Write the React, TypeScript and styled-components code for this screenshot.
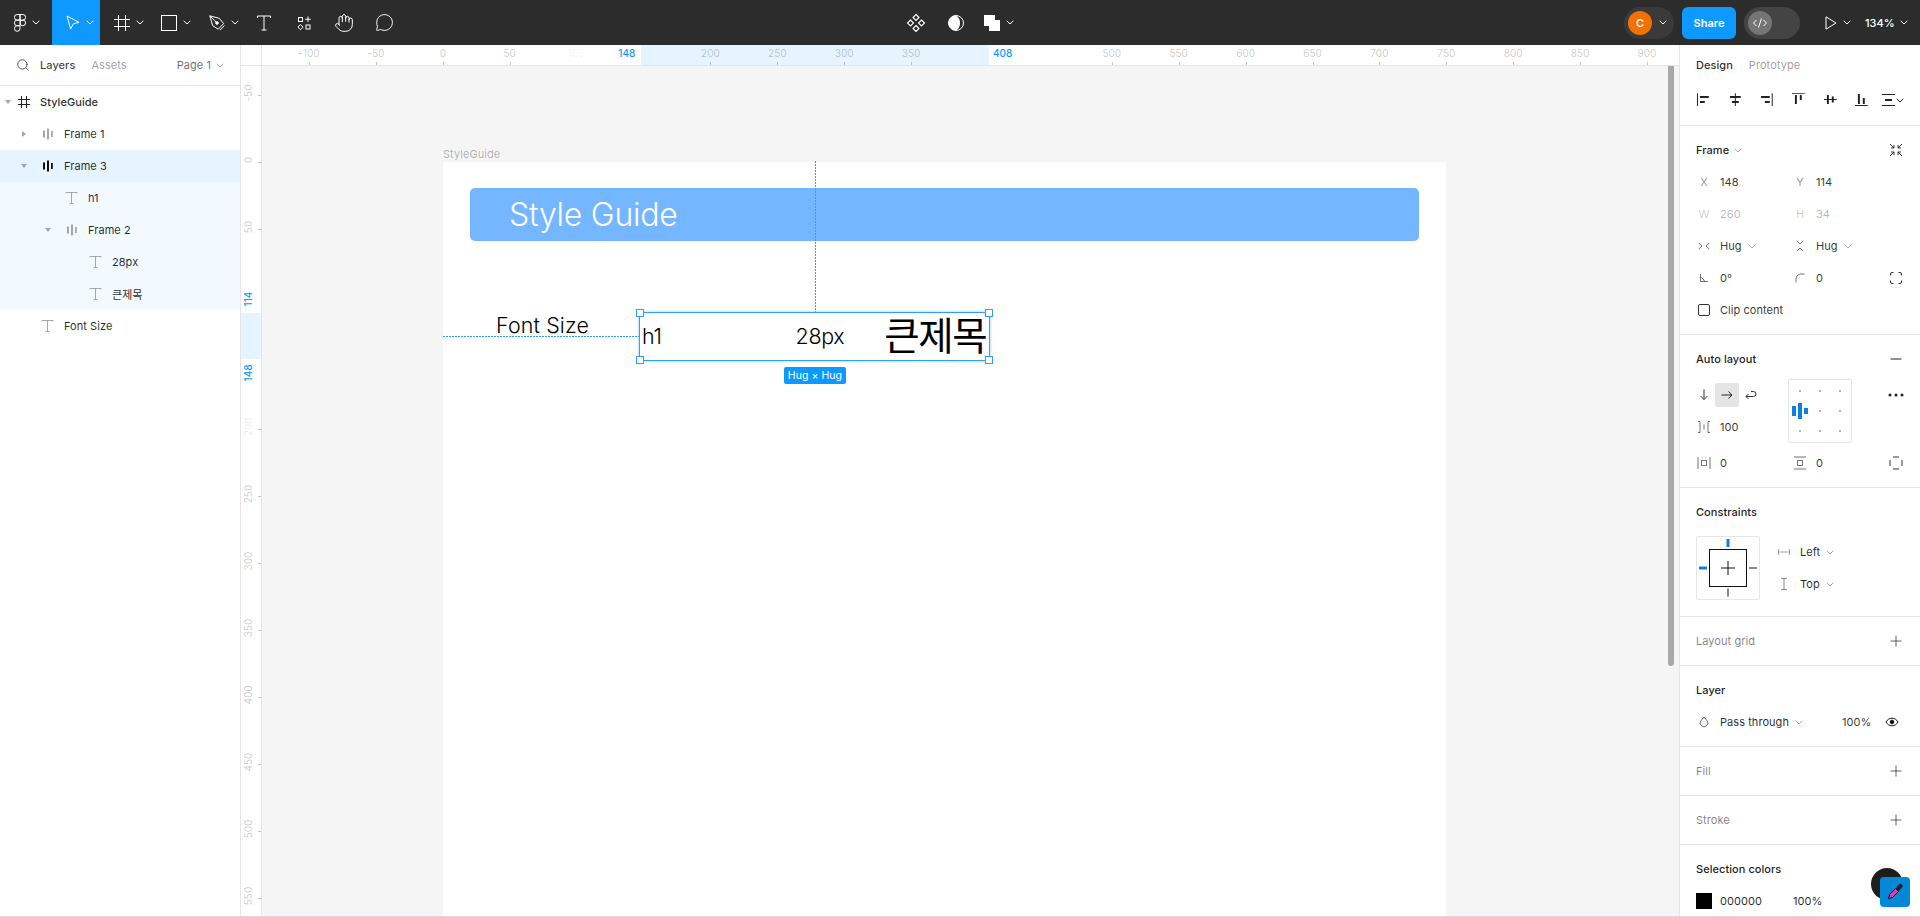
import { FC, ReactNode } from "react";
import styled, { createGlobalStyle } from "styled-components";
import { Hand, MessageCircle, Search } from "lucide-react";

const UI_FONT = `Inter, "Noto Sans CJK KR", sans-serif`;
const RULER_SCALE = 1.338;
const ORIGIN_X = 442.8;
const ORIGIN_Y = 161.7;
const BLUE = "#0d99ff";

const GlobalStyle = createGlobalStyle`
  html, body {
    margin: 0;
    padding: 0;
    background: #d3deea;
  }
  * {
    box-sizing: border-box;
  }
`;

/* small drawings */

const Chevron: FC<{ light?: boolean; dark?: boolean }> = ({ light, dark }) => (
  <svg width="8" height="5" viewBox="0 0 8 5" fill="none">
    <path d="M.7.8 4 4 7.3.8" stroke={light ? "#fff" : dark ? "#222" : "rgba(0,0,0,.35)"} strokeWidth="1" />
  </svg>
);

const Ico: FC<{ size?: number; w?: number; h?: number; children: ReactNode; stroke?: string; fill?: string }> = ({
  size = 16,
  w,
  h,
  children,
  stroke = "none",
  fill = "none",
}) => (
  <svg width={w ?? size} height={h ?? size} viewBox={`0 0 ${w ?? size} ${h ?? size}`} fill={fill} stroke={stroke}>
    {children}
  </svg>
);

const TextGlyph = () => (
  <Ico size={14} stroke="#a6a6a6">
    <path d="M1 2.5V1.500h11v1M6.500 1.500v11M4.500 12.500h4" />
  </Ico>
);

const AutoGlyph: FC<{ dark?: boolean }> = ({ dark }) => (
  <Ico size={12} fill={dark ? "#111" : "#a6a6a6"}>
    <path d="M1 2.500h2v7H1zM5 .5h2v11H5zM9 3h1.800v6H9z" />
  </Ico>
);

const FrameGlyph = () => (
  <Ico size={12} stroke="#222">
    <path d="M3.500 0v12M8.500 0v12M0 3.500h12M0 8.500h12" />
  </Ico>
);

const Caret: FC<{ open?: boolean }> = ({ open }) => (
  <svg width="6" height="6" viewBox="0 0 6 6" fill="#a6a6a6">
    {open ? <path d="M0 1h6L3 5z" /> : <path d="M1 0v6l4-3z" />}
  </svg>
);

const PlusIcon = () => (
  <Ico size={12} stroke="rgba(0,0,0,.6)">
    <path d="M6 .5v11M.5 6h11" />
  </Ico>
);

const alignPaths = [
  "M1 1h1v13H1zM4 4h9v2H4zM4 9h5v2H4z",
  "M7 1h1v13H7zM2 4h11v2H2zM4 9h7v2H4z",
  "M13 1h1v13h-1zM2 4h9v2H2zM6 9h5v2H6z",
  "M1 1h13v1H1zM4 3h2v9H4zM9 3h2v5H9z",
  "M1 7h13v1H1zM4 3h2v9H4zM9 4.500h2v6H9z",
  "M1 13h13v1H1zM4 2h2v10H4zM9 6h2v6H9z",
];

/* page */

const Page = styled.div`
  height: 916px;
  overflow: hidden;
  display: flex;
  flex-direction: column;
  font-family: ${UI_FONT};
  font-size: 11px;
  letter-spacing: 0.005em;
  color: rgba(0, 0, 0, 0.85);
  background: #fff;
`;

const TopBar = styled.header`
  flex: 0 0 45px;
  display: flex;
  align-items: center;
  background: #2c2c2c;
  color: #fff;
`;

const ToolGroup = styled.div`
  display: flex;
  width: 404px;
  height: 100%;
`;

const Tool = styled.div<{ $w: number; $active?: boolean; $pad?: number }>`
  width: ${({ $w }) => $w}px;
  height: 100%;
  display: flex;
  align-items: center;
  justify-content: ${({ $pad }) => ($pad === undefined ? "center" : "flex-start")};
  padding-left: ${({ $pad }) => $pad ?? 0}px;
  gap: 6px;
  background: ${({ $active }) => ($active ? BLUE : "transparent")};
`;

const CenterGroup = styled.div`
  margin-left: 500px;
  display: flex;
  align-items: center;
  gap: 16px;
`;

const CenterTool = styled.div`
  display: flex;
  align-items: center;
  gap: 6px;
`;

const RightGroup = styled.div`
  margin-left: auto;
  display: flex;
  align-items: center;
`;

const AvatarPill = styled.div`
  width: 50px;
  height: 32px;
  border-radius: 16px;
  background: #3a3a3a;
  display: flex;
  align-items: center;
  padding-left: 4px;
  gap: 7px;
`;

const Avatar = styled.div`
  width: 24px;
  height: 24px;
  border-radius: 50%;
  background: #f27100;
  display: flex;
  align-items: center;
  justify-content: center;
  font-weight: 500;
`;

const ShareButton = styled.div`
  margin-left: 8px;
  width: 54px;
  height: 32px;
  border-radius: 6px;
  background: ${BLUE};
  display: flex;
  align-items: center;
  justify-content: center;
  font-weight: 600;
`;

const DevToggle = styled.div`
  margin-left: 8px;
  width: 56px;
  height: 32px;
  border-radius: 16px;
  background: #444;
  padding: 4px;
`;

const DevKnob = styled.div`
  width: 24px;
  height: 24px;
  border-radius: 50%;
  background: #757575;
  display: flex;
  align-items: center;
  justify-content: center;
`;

const PlayTool = styled.div`
  margin-left: 25px;
  width: 40px;
  display: flex;
  align-items: center;
  gap: 6px;
`;

const ZoomTool = styled.div`
  width: 55px;
  display: flex;
  align-items: center;
  gap: 5px;
  font-weight: 500;
`;

const Body = styled.div`
  flex: 1;
  display: flex;
  min-height: 0;
`;

/* layers panel */

const LeftPanel = styled.aside`
  flex: 0 0 241px;
  border-right: 1px solid #e5e5e5;
`;

const PanelTabs = styled.div`
  height: 41px;
  border-bottom: 1px solid #e5e5e5;
  display: flex;
  align-items: center;
  padding-left: 16px;
`;

const LayersTab = styled.span`
  margin-left: 10px;
  font-weight: 500;
  color: rgba(0, 0, 0, 0.75);
`;

const AssetsTab = styled.span`
  margin-left: 16px;
  color: rgba(0, 0, 0, 0.4);
`;

const PageSwitch = styled.span`
  margin-left: auto;
  margin-right: 16px;
  display: flex;
  align-items: center;
  gap: 5px;
  color: rgba(0, 0, 0, 0.6);
`;

const LayerRow = styled.div<{ $pad: number; $tint?: "main" | "child"; $strong?: boolean }>`
  height: 32px;
  display: flex;
  align-items: center;
  padding-left: ${({ $pad }) => $pad}px;
  font-weight: ${({ $strong }) => ($strong ? 500 : 400)};
  background: ${({ $tint }) => ($tint === "main" ? "#e5f4ff" : $tint === "child" ? "#f2f9ff" : "transparent")};
`;

const CaretSlot = styled.span<{ $gap: number }>`
  width: 16px;
  margin-right: ${({ $gap }) => $gap}px;
  display: flex;
  justify-content: center;
`;

const IconSlot = styled.span`
  width: 16px;
  margin-right: 8px;
  display: flex;
  align-items: center;
  justify-content: center;
`;

interface Layer {
  name: string;
  pad: number;
  icon: ReactNode;
  caret?: "open" | "closed";
  caretGap?: number;
  tint?: "main" | "child";
  strong?: boolean;
}

const layers: Layer[] = [
  { name: "StyleGuide", pad: 0, icon: <FrameGlyph />, caret: "open", caretGap: 0, strong: true },
  { name: "Frame 1", pad: 16, icon: <AutoGlyph />, caret: "closed", caretGap: 8 },
  { name: "Frame 3", pad: 16, icon: <AutoGlyph dark />, caret: "open", caretGap: 8, tint: "main" },
  { name: "h1", pad: 64, icon: <TextGlyph />, tint: "child" },
  { name: "Frame 2", pad: 40, icon: <AutoGlyph />, caret: "open", caretGap: 8, tint: "child" },
  { name: "28px", pad: 88, icon: <TextGlyph />, tint: "child" },
  { name: "큰제목", pad: 88, icon: <TextGlyph />, tint: "child" },
  { name: "Font Size", pad: 40, icon: <TextGlyph /> },
];

/* rulers and canvas */

const CanvasArea = styled.main`
  flex: 1;
  min-width: 0;
  display: grid;
  grid-template-columns: 21px 1fr;
  grid-template-rows: 21px 1fr;
`;

const RulerCorner = styled.div`
  border-right: 1px solid #e5e5e5;
  border-bottom: 1px solid #e5e5e5;
`;

const TopRuler = styled.div`
  position: relative;
  overflow: hidden;
  border-bottom: 1px solid #e5e5e5;
`;

const SideRuler = styled.div`
  position: relative;
  overflow: hidden;
  border-right: 1px solid #e5e5e5;
`;

const RulerBand = styled.div`
  position: absolute;
  background: #e5f4ff;
`;

const TopLabel = styled.span<{ $blue?: boolean; $faint?: boolean }>`
  position: absolute;
  top: 1px;
  transform: translateX(-50%);
  font-size: 10px;
  line-height: 14px;
  letter-spacing: 0;
  font-weight: ${({ $blue }) => ($blue ? 500 : 400)};
  color: ${({ $blue, $faint }) => ($blue ? BLUE : $faint ? "rgba(0,0,0,.07)" : "rgba(0,0,0,.22)")};
`;

const TopTick = styled.i`
  position: absolute;
  bottom: 0;
  width: 1px;
  height: 3px;
  background: rgba(0, 0, 0, 0.22);
`;

const SideLabel = styled.span<{ $blue?: boolean; $faint?: boolean }>`
  position: absolute;
  left: 7px;
  width: 0;
  height: 0;
  display: flex;
  align-items: center;
  justify-content: center;
  white-space: nowrap;
  transform: rotate(-90deg);
  font-size: 10px;
  letter-spacing: 0;
  font-weight: ${({ $blue }) => ($blue ? 500 : 400)};
  color: ${({ $blue, $faint }) => ($blue ? BLUE : $faint ? "rgba(0,0,0,.1)" : "rgba(0,0,0,.22)")};
`;

const SideTick = styled.i`
  position: absolute;
  right: 0;
  width: 3px;
  height: 1px;
  background: rgba(0, 0, 0, 0.22);
`;

const Stage = styled.div`
  position: relative;
  overflow: hidden;
  background: #f5f5f5;
`;

const ScrollThumb = styled.div`
  position: absolute;
  top: 0;
  right: 5px;
  width: 6px;
  height: 600px;
  background: #a8a8a8;
  border-radius: 0 0 3px 3px;
`;

const FrameLabel = styled.span`
  position: absolute;
  left: 0;
  top: -15px;
  color: rgba(0, 0, 0, 0.3);
`;

const DesignFrame = styled.section`
  position: absolute;
  left: 181px;
  top: 96px;
  width: 1003px;
  height: 800px;
  background: #fff;
  padding: 26px 27px;
`;

const Banner = styled.div`
  height: 53px;
  border-radius: 5px;
  background: #74b6ff;
  color: #fff;
  display: flex;
  align-items: center;
  padding-left: 39px;
  font-size: 32px;
  font-weight: 300;
  letter-spacing: -0.25px;
`;

const FontRow = styled.div`
  margin-top: 72px;
  margin-left: 26px;
  display: flex;
  align-items: flex-start;
`;

const FontLabel = styled.div`
  width: 144px;
  margin-top: -3px;
  font-size: 21.4px;
  line-height: 30px;
  letter-spacing: 0.15px;
  color: #000;
  font-weight: 300;
`;

const Selection = styled.div`
  position: relative;
  width: 349px;
  height: 47px;
  padding-bottom: 2px;
  display: flex;
  align-items: center;
  color: #000;
  font-size: 21.4px;
  font-weight: 300;
  outline: 1.5px solid #2f9ffb;
  box-shadow: 0 0 0 2.5px rgba(13, 153, 255, 0.18);
`;

const FrameTwo = styled.div`
  margin-left: 134px;
  display: flex;
  align-items: center;
  gap: 40px;
`;

const H1Text = styled.span`
  margin-left: 2px;
  letter-spacing: -0.3px;
`;

const PxText = styled.span`
  letter-spacing: -0.3px;
`;

const KoreanText = styled.span`
  margin-top: -5px;
  font-family: "Noto Sans CJK KR", sans-serif;
  font-size: 38.5px;
  font-weight: 400;
  line-height: 44px;
  letter-spacing: -1.5px;
`;

const Handle = styled.i<{ $x: "left" | "right"; $y: "top" | "bottom" }>`
  position: absolute;
  ${({ $x }) => $x}: -4px;
  ${({ $y }) => $y}: -4px;
  width: 8px;
  height: 8px;
  background: #fff;
  border: 1.5px solid #2f9ffb;
`;

const GuideV = styled.i`
  position: absolute;
  left: 175px;
  bottom: 100%;
  width: 1px;
  height: 152px;
  background: repeating-linear-gradient(to bottom, #2f9ffb 0 2px, transparent 2px 3px);
`;

const GuideH = styled.i`
  position: absolute;
  right: 100%;
  top: 23px;
  width: 197px;
  height: 1px;
  background: repeating-linear-gradient(to right, #2f9ffb 0 2px, transparent 2px 3px);
`;

const HugBadge = styled.span`
  position: absolute;
  left: 144px;
  top: 54px;
  width: 62px;
  height: 17px;
  border-radius: 2px;
  background: ${BLUE};
  color: #fff;
  font-size: 10.5px;
  font-weight: 400;
  display: flex;
  align-items: center;
  justify-content: center;
  white-space: nowrap;
`;

/* design panel */

const RightPanel = styled.aside`
  flex: 0 0 241px;
  min-width: 0;
  width: 241px;
  border-left: 1px solid #e5e5e5;
  background: #fff;
`;

const Section = styled.section<{ $noBorder?: boolean }>`
  padding: 8px 16px;
  border-bottom: ${({ $noBorder }) => ($noBorder ? "none" : "1px solid #e5e5e5")};
`;

const HeaderSection = styled.section`
  height: 81px;
  padding: 0 16px;
  border-bottom: 1px solid #e5e5e5;
`;

const PanelNav = styled.div`
  height: 40px;
  display: flex;
  align-items: center;
  gap: 16px;
  font-weight: 500;
`;

const PrototypeTab = styled.span`
  color: rgba(0, 0, 0, 0.4);
  font-weight: 400;
`;

const AlignRow = styled.div`
  height: 32px;
  margin-top: -1px;
  display: flex;
  align-items: center;
  gap: 16px;
`;

const DistributeTool = styled.span`
  margin-left: -4px;
  display: flex;
  align-items: center;
  flex-shrink: 0;
`;

const SectionHead = styled.div<{ $muted?: boolean }>`
  height: 32px;
  display: flex;
  align-items: center;
  justify-content: space-between;
  font-weight: ${({ $muted }) => ($muted ? 400 : 500)};
  color: ${({ $muted }) => ($muted ? "rgba(0,0,0,.5)" : "rgba(0,0,0,.9)")};
`;

const HeadTitle = styled.span`
  display: flex;
  align-items: center;
  gap: 5px;
`;

const HeadAction = styled.span`
  width: 16px;
  display: flex;
  align-items: center;
  justify-content: center;
`;

const PropRow = styled.div<{ $gapTop?: number }>`
  height: 32px;
  margin-top: ${({ $gapTop }) => $gapTop ?? 0}px;
  display: grid;
  grid-template-columns: 96px 96px 16px;
  align-items: center;
`;

const Prop = styled.div<{ $dim?: boolean }>`
  display: flex;
  align-items: center;
  gap: 8px;
  color: ${({ $dim }) => ($dim ? "rgba(0,0,0,.3)" : "rgba(0,0,0,.8)")};
`;

const PropIcon = styled.span<{ $dim?: boolean }>`
  width: 16px;
  display: flex;
  justify-content: center;
  color: ${({ $dim }) => ($dim ? "rgba(0,0,0,.22)" : "rgba(0,0,0,.45)")};
`;

const Inline = styled.span`
  display: flex;
  align-items: center;
  gap: 6px;
`;

const AutoBody = styled.div`
  margin-top: 4px;
  display: grid;
  grid-template-columns: 92px 64px 1fr;
  grid-template-rows: 32px 32px;
`;

const DirectionRow = styled.div`
  display: flex;
  align-items: center;
`;

const DirCell = styled.span<{ $active?: boolean; $w: number }>`
  width: ${({ $w }) => $w}px;
  height: 24px;
  border-radius: 2px;
  display: flex;
  align-items: center;
  justify-content: center;
  background: ${({ $active }) => ($active ? "#e5e5e5" : "transparent")};
  margin-left: ${({ $active }) => ($active ? 3 : 0)}px;
`;

const AlignBox = styled.div`
  grid-row: 1 / 3;
  grid-column: 2;
  width: 64px;
  height: 64px;
  border: 1px solid #e5e5e5;
  border-radius: 2px;
`;

const MoreCell = styled.div`
  display: flex;
  align-items: center;
  justify-content: flex-end;
`;

const ConstraintBody = styled.div`
  margin: 8px 0 8px;
  display: flex;
  gap: 16px;
`;

const ConstraintBox = styled.div`
  width: 64px;
  height: 64px;
  border: 1px solid #e5e5e5;
  border-radius: 2px;
`;

const ConstraintList = styled.div`
  display: flex;
  flex-direction: column;
`;

const ConstraintRow = styled.div`
  height: 32px;
  display: flex;
  align-items: center;
  gap: 8px;
`;

const LayerProps = styled.div`
  height: 32px;
  display: flex;
  align-items: center;
`;

const BlendName = styled.span`
  display: flex;
  align-items: center;
  gap: 6px;
  margin-left: 8px;
  width: 122px;
`;

const OpacityValue = styled.span`
  width: 42px;
  color: rgba(0, 0, 0, 0.8);
`;

const ColorRow = styled.div`
  height: 32px;
  display: flex;
  align-items: center;
`;

const Swatch = styled.span`
  width: 16px;
  height: 16px;
  background: #000;
`;

const ColorHex = styled.span`
  margin-left: 8px;
  width: 73px;
`;

const FloatingDot = styled.div`
  position: absolute;
  right: 17px;
  bottom: 17px;
  width: 32px;
  height: 32px;
  border-radius: 50%;
  background: #1e1e1e;
`;

const FloatingBadge = styled.div`
  position: absolute;
  right: 10px;
  bottom: 10px;
  width: 30px;
  height: 30px;
  border-radius: 4px;
  background: #0288d6;
  display: flex;
  align-items: center;
  justify-content: center;
`;

const topValues = [-100, -50, 0, 50, 100, 200, 250, 300, 350, 500, 550, 600, 650, 700, 750, 800, 850, 900];
const sideValues = [-50, 0, 50, 200, 250, 300, 350, 400, 450, 500, 550];

const App: FC = () => {
  const rulerX = (v: number) => ORIGIN_X + v * RULER_SCALE - 262;
  const rulerY = (v: number) => ORIGIN_Y + v * RULER_SCALE - 66;

  return (
    <Page>
      <GlobalStyle />
      <TopBar>
        <ToolGroup>
          <Tool $w={52} $pad={14}>
            <Ico w={12} h={18} stroke="#fff">
              <path d="M6 .5H3.200a2.700 2.700 0 0 0 0 5.600H6zM6 .5h2.800a2.700 2.700 0 0 1 0 5.600H6zM6 6.100H3.200a2.700 2.700 0 0 0 0 5.600H6zM6 11.700H3.200a2.800 2.800 0 1 0 2.800 2.900zM6 8.900a2.800 2.800 0 1 0 5.600 0 2.800 2.800 0 1 0-5.600 0" />
            </Ico>
            <Chevron light />
          </Tool>
          <Tool $w={48} $active $pad={14}>
            <Ico w={14} h={15} stroke="#fff">
              <path d="M1 1l12 6.300-5.700 1.500L4.600 14z" />
            </Ico>
            <Chevron light />
          </Tool>
          <Tool $w={48} $pad={14}>
            <Ico size={16} stroke="#fff">
              <path d="M4.500 0v16M11.500 0v16M0 4.500h16M0 11.500h16" />
            </Ico>
            <Chevron light />
          </Tool>
          <Tool $w={48} $pad={13}>
            <Ico size={16} stroke="#fff">
              <rect x=".5" y=".5" width="15" height="15" />
            </Ico>
            <Chevron light />
          </Tool>
          <Tool $w={48} $pad={13}>
            <Ico size={16} stroke="#fff">
              <path d="M.8.8l9.600 2.600 4.200 5.200-5.400 5.600-5.600-3.600zM.8.8l6.600 6.600M11 15.200l4.400-4.600" />
              <circle cx="8" cy="8" r="1.300" fill="#fff" />
            </Ico>
            <Chevron light />
          </Tool>
          <Tool $w={40}>
            <Ico w={14} h={16} stroke="#fff">
              <path d="M.5 3V1h13v2M7 1v14M4.500 15h5" />
            </Ico>
          </Tool>
          <Tool $w={40}>
            <Ico w={16} h={16} stroke="#fff">
              <rect x="2.500" y="2.500" width="4" height="4" />
              <path d="M12 1.500v5.500M9.200 4.300h5.500" />
              <path d="M4.500 9.500l2.600 2.600-2.600 2.600-2.600-2.600z" />
              <rect x="10" y="10" width="4" height="4" />
            </Ico>
          </Tool>
          <Tool $w={40}>
            <Hand size={20} color="#fff" strokeWidth={1.2} />
          </Tool>
          <Tool $w={40}>
            <MessageCircle size={19} color="#fff" strokeWidth={1.2} />
          </Tool>
        </ToolGroup>
        <CenterGroup>
          <CenterTool>
            <Ico size={24}>
              <g stroke="#fff" strokeWidth="1.100">
                <path d="M12 3.500l3 3-3 3-3-3zM12 14.500l3 3-3 3-3-3zM6.500 9l3 3-3 3-3-3zM17.500 9l3 3-3 3-3-3z" />
              </g>
            </Ico>
          </CenterTool>
          <CenterTool>
            <Ico size={24}>
              <circle cx="12" cy="12" r="7.500" stroke="#fff" />
              <path d="M12 4.500a7.500 7.500 0 0 0 0 15c3-1.500 4-4.500 4-7.500s-1-6-4-7.500z" fill="#fff" />
            </Ico>
          </CenterTool>
          <CenterTool>
            <Ico size={16} fill="#fff">
              <path d="M0 0h11v5h5v11H5v-5H0z" />
            </Ico>
            <Chevron light />
          </CenterTool>
        </CenterGroup>
        <RightGroup>
          <AvatarPill>
            <Avatar>C</Avatar>
            <Chevron light />
          </AvatarPill>
          <ShareButton>Share</ShareButton>
          <DevToggle>
            <DevKnob>
              <Ico w={16} h={12} stroke="#fff">
                <path d="M4.500 3L1.500 6l3 3M11.500 3l3 3-3 3M9.500 1.500l-3 9" />
              </Ico>
            </DevKnob>
          </DevToggle>
          <PlayTool>
            <Ico w={12} h={14} stroke="#fff">
              <path d="M1 .8v12.400L11 7z" />
            </Ico>
            <Chevron light />
          </PlayTool>
          <ZoomTool>
            134%
            <Chevron light />
          </ZoomTool>
        </RightGroup>
      </TopBar>

      <Body>
        <LeftPanel>
          <PanelTabs>
            <Search size={14} strokeWidth={1.4} color="#333" />
            <LayersTab>Layers</LayersTab>
            <AssetsTab>Assets</AssetsTab>
            <PageSwitch>
              Page 1 <Chevron />
            </PageSwitch>
          </PanelTabs>
          {layers.map((layer) => (
            <LayerRow key={layer.name} $pad={layer.pad} $tint={layer.tint} $strong={layer.strong}>
              {layer.caret && (
                <CaretSlot $gap={layer.caretGap ?? 0}>
                  <Caret open={layer.caret === "open"} />
                </CaretSlot>
              )}
              <IconSlot>{layer.icon}</IconSlot>
              {layer.name}
            </LayerRow>
          ))}
        </LeftPanel>

        <CanvasArea>
          <RulerCorner />
          <TopRuler>
            <RulerBand style={{ left: rulerX(148), width: 260 * RULER_SCALE, top: 0, bottom: 0 }} />
            {topValues.map((v) => (
              <div key={v}>
                <TopLabel $faint={v === 100} style={{ left: rulerX(v) }}>
                  {v}
                </TopLabel>
                {v !== 100 && <TopTick style={{ left: rulerX(v) }} />}
              </div>
            ))}
            <TopLabel $blue style={{ left: rulerX(148) - 14 }}>
              148
            </TopLabel>
            <TopLabel $blue style={{ left: rulerX(408) + 14 }}>
              408
            </TopLabel>
          </TopRuler>
          <SideRuler>
            <RulerBand style={{ top: rulerY(114) - 1, height: 34 * RULER_SCALE, left: 0, right: 0 }} />
            {sideValues.map((v) => (
              <div key={v}>
                <SideLabel $faint={v === 200} style={{ top: rulerY(v) - 2 }}>
                  {v}
                </SideLabel>
                <SideTick style={{ top: rulerY(v) }} />
              </div>
            ))}
            <SideLabel $blue style={{ top: rulerY(114) - 15 }}>
              114
            </SideLabel>
            <SideLabel $blue style={{ top: rulerY(148) + 13 }}>
              148
            </SideLabel>
          </SideRuler>
          <Stage>
            <DesignFrame>
              <FrameLabel>StyleGuide</FrameLabel>
              <Banner>Style Guide</Banner>
              <FontRow>
                <FontLabel>Font Size</FontLabel>
                <Selection>
                  <GuideV />
                  <GuideH />
                  <H1Text>h1</H1Text>
                  <FrameTwo>
                    <PxText>28px</PxText>
                    <KoreanText>큰제목</KoreanText>
                  </FrameTwo>
                  <Handle $x="left" $y="top" />
                  <Handle $x="right" $y="top" />
                  <Handle $x="left" $y="bottom" />
                  <Handle $x="right" $y="bottom" />
                  <HugBadge>Hug × Hug</HugBadge>
                </Selection>
              </FontRow>
            </DesignFrame>
            <ScrollThumb />
          </Stage>
        </CanvasArea>

        <RightPanel>
          <HeaderSection>
            <PanelNav>
              <span>Design</span>
              <PrototypeTab>Prototype</PrototypeTab>
            </PanelNav>
            <AlignRow>
              {alignPaths.map((d) => (
                <Ico key={d} size={16} fill="#222">
                  <path d={d} />
                </Ico>
              ))}
              <DistributeTool>
                <Ico w={14} h={16} fill="#222">
                  <path d="M0 2h13v1H0zM3 7h7v2H3zM0 13h13v1H0z" />
                </Ico>
                <Chevron dark />
              </DistributeTool>
            </AlignRow>
          </HeaderSection>

          <Section>
            <SectionHead>
              <HeadTitle>
                Frame <Chevron />
              </HeadTitle>
              <HeadAction>
                <Ico size={14} stroke="#333">
                  <path d="M1 1l4 4M5 2v3H2M13 1L9 5M9 2v3h3M1 13l4-4M5 12V9H2M13 13L9 9M9 12V9h3" />
                </Ico>
              </HeadAction>
            </SectionHead>
            <PropRow>
              <Prop>
                <PropIcon>X</PropIcon>148
              </Prop>
              <Prop>
                <PropIcon>Y</PropIcon>114
              </Prop>
            </PropRow>
            <PropRow>
              <Prop $dim>
                <PropIcon $dim>W</PropIcon>260
              </Prop>
              <Prop $dim>
                <PropIcon $dim>H</PropIcon>34
              </Prop>
            </PropRow>
            <PropRow>
              <Prop>
                <PropIcon>
                  <Ico w={12} h={8} stroke="rgba(0,0,0,.55)">
                    <path d="M1 1l3 3-3 3M11 1L8 4l3 3" />
                  </Ico>
                </PropIcon>
                <Inline>
                  Hug <Chevron />
                </Inline>
              </Prop>
              <Prop>
                <PropIcon>
                  <Ico w={8} h={12} stroke="rgba(0,0,0,.55)">
                    <path d="M1 1l3 3 3-3M1 11l3-3 3 3" />
                  </Ico>
                </PropIcon>
                <Inline>
                  Hug <Chevron />
                </Inline>
              </Prop>
            </PropRow>
            <PropRow>
              <Prop>
                <PropIcon>
                  <Ico size={10} stroke="rgba(0,0,0,.55)">
                    <path d="M1.500 1v7.500H9M1.500 4.500c2 .4 3.500 2 4 4" />
                  </Ico>
                </PropIcon>
                0°
              </Prop>
              <Prop>
                <PropIcon>
                  <Ico size={10} stroke="rgba(0,0,0,.55)">
                    <path d="M1 9.500V6a5 5 0 0 1 5-5h3.500" />
                  </Ico>
                </PropIcon>
                0
              </Prop>
              <HeadAction>
                <Ico size={12} stroke="#333">
                  <path d="M.5 3.500V2A1.500 1.500 0 0 1 2 .5h1.500M8.500.5H10A1.500 1.500 0 0 1 11.500 2v1.500M11.500 8.500V10a1.500 1.500 0 0 1-1.500 1.500H8.500M3.500 11.500H2A1.500 1.500 0 0 1 .5 10V8.500" />
                </Ico>
              </HeadAction>
            </PropRow>
            <PropRow>
              <Prop>
                <PropIcon>
                  <Ico size={12} stroke="#333">
                    <rect x=".5" y=".5" width="11" height="11" rx="1.500" />
                  </Ico>
                </PropIcon>
                Clip&nbsp;content
              </Prop>
            </PropRow>
          </Section>

          <Section>
            <SectionHead>
              Auto layout
              <HeadAction>
                <Ico size={12} stroke="#222">
                  <path d="M.5 6h11" />
                </Ico>
              </HeadAction>
            </SectionHead>
            <AutoBody>
              <DirectionRow>
                <DirCell $w={16}>
                  <Ico w={10} h={12} stroke="#333">
                    <path d="M5 .5v10M1.500 7L5 10.500 8.500 7" />
                  </Ico>
                </DirCell>
                <DirCell $w={24} $active>
                  <Ico w={12} h={10} stroke="#222">
                    <path d="M.5 5h10.500M7.500 1.500L11 5 7.500 8.500" />
                  </Ico>
                </DirCell>
                <DirCell $w={24}>
                  <Ico w={12} h={10} stroke="#333">
                    <path d="M3.500 9L1 6.500 3.500 4M1 6.500h7.500a2.500 2.500 0 0 0 0-5H6" />
                  </Ico>
                </DirCell>
              </DirectionRow>
              <AlignBox>
                <Ico w={62} h={62}>
                  <g fill="#b3b3b3">
                    {[11, 31, 51].flatMap((x) =>
                      [11, 31, 51]
                        .filter((y) => !(x === 11 && y === 31))
                        .map((y) => <rect key={`${x}-${y}`} x={x - 1} y={y - 1} width="2" height="2" />),
                    )}
                  </g>
                  <path d="M3 26h4v10H3zM9 23h4v16H9zM15 28h4v6h-4z" fill="#0c7fe3" />
                </Ico>
              </AlignBox>
              <MoreCell>
                <Ico w={16} h={4} fill="#222">
                  <circle cx="2" cy="2" r="1.500" />
                  <circle cx="8" cy="2" r="1.500" />
                  <circle cx="14" cy="2" r="1.500" />
                </Ico>
              </MoreCell>
              <Prop>
                <PropIcon>
                  <Ico w={14} h={12} stroke="rgba(0,0,0,.55)">
                    <path d="M1 .5h2v11H1M13 .5h-2v11h2M7 3.500v5" />
                  </Ico>
                </PropIcon>
                100
              </Prop>
            </AutoBody>
            <PropRow $gapTop={4}>
              <Prop>
                <PropIcon>
                  <Ico w={14} h={14} stroke="rgba(0,0,0,.55)">
                    <path d="M1 1v12M13 1v12" />
                    <rect x="4.500" y="4.500" width="5" height="5" />
                  </Ico>
                </PropIcon>
                0
              </Prop>
              <Prop>
                <PropIcon>
                  <Ico w={14} h={14} stroke="rgba(0,0,0,.55)">
                    <path d="M1 1h12M1 13h12" />
                    <rect x="4.500" y="4.500" width="5" height="5" />
                  </Ico>
                </PropIcon>
                0
              </Prop>
              <HeadAction>
                <Ico w={14} h={14} stroke="#333">
                  <path d="M4 1h6M4 13h6M1 4v6M13 4v6" />
                </Ico>
              </HeadAction>
            </PropRow>
          </Section>

          <Section>
            <SectionHead>Constraints</SectionHead>
            <ConstraintBody>
              <ConstraintBox>
                <Ico w={62} h={62}>
                  <rect x="12.500" y="12.500" width="37" height="37" stroke="#111" />
                  <path d="M31 24v14M24 31h14M31 51.500v8M52 31h8" stroke="#111" />
                  <path d="M29.500 2h3v8h-3zM2 29.500h8v3H2z" fill="#0c7fe3" />
                </Ico>
              </ConstraintBox>
              <ConstraintList>
                <ConstraintRow>
                  <PropIcon>
                    <Ico w={12} h={8} stroke="rgba(0,0,0,.35)">
                      <path d="M.5 1v6M11.500 1v6M.5 4h11" />
                    </Ico>
                  </PropIcon>
                  <Inline>
                    Left <Chevron />
                  </Inline>
                </ConstraintRow>
                <ConstraintRow>
                  <PropIcon>
                    <Ico w={8} h={12} stroke="rgba(0,0,0,.45)">
                      <path d="M1 .5h6M1 11.500h6M4 .5v11" />
                    </Ico>
                  </PropIcon>
                  <Inline>
                    Top <Chevron />
                  </Inline>
                </ConstraintRow>
              </ConstraintList>
            </ConstraintBody>
          </Section>

          <Section>
            <SectionHead $muted>
              Layout grid
              <HeadAction>
                <PlusIcon />
              </HeadAction>
            </SectionHead>
          </Section>

          <Section>
            <SectionHead>Layer</SectionHead>
            <LayerProps>
              <PropIcon>
                <Ico w={10} h={12} stroke="rgba(0,0,0,.6)">
                  <path d="M5 1l3 3.600a3.800 3.800 0 1 1-6 0z" />
                </Ico>
              </PropIcon>
              <BlendName>
                Pass through <Chevron />
              </BlendName>
              <OpacityValue>100%</OpacityValue>
              <HeadAction>
                <Ico w={14} h={10} stroke="#111">
                  <path d="M1 5c1.500-2.500 3.500-3.800 6-3.800S11.500 2.500 13 5c-1.500 2.500-3.500 3.800-6 3.800S2.500 7.500 1 5z" />
                  <circle cx="7" cy="5" r="1.800" fill="#111" />
                </Ico>
              </HeadAction>
            </LayerProps>
          </Section>

          <Section>
            <SectionHead $muted>
              Fill
              <HeadAction>
                <PlusIcon />
              </HeadAction>
            </SectionHead>
          </Section>

          <Section>
            <SectionHead $muted>
              Stroke
              <HeadAction>
                <PlusIcon />
              </HeadAction>
            </SectionHead>
          </Section>

          <Section $noBorder>
            <SectionHead>Selection colors</SectionHead>
            <ColorRow>
              <Swatch />
              <ColorHex>000000</ColorHex>
              <span>100%</span>
            </ColorRow>
            <FloatingDot />
            <FloatingBadge>
              <Ico size={20}>
                <path d="M3.500 16.500l1-4 6-6 3 3-6 6z" fill="#e23bb5" stroke="#111" />
                <path d="M10.500 6.500L14 2.500a2 2 0 0 1 3 3l-3.500 4z" fill="#222" />
              </Ico>
            </FloatingBadge>
          </Section>
        </RightPanel>
      </Body>
    </Page>
  );
};

export default App;
